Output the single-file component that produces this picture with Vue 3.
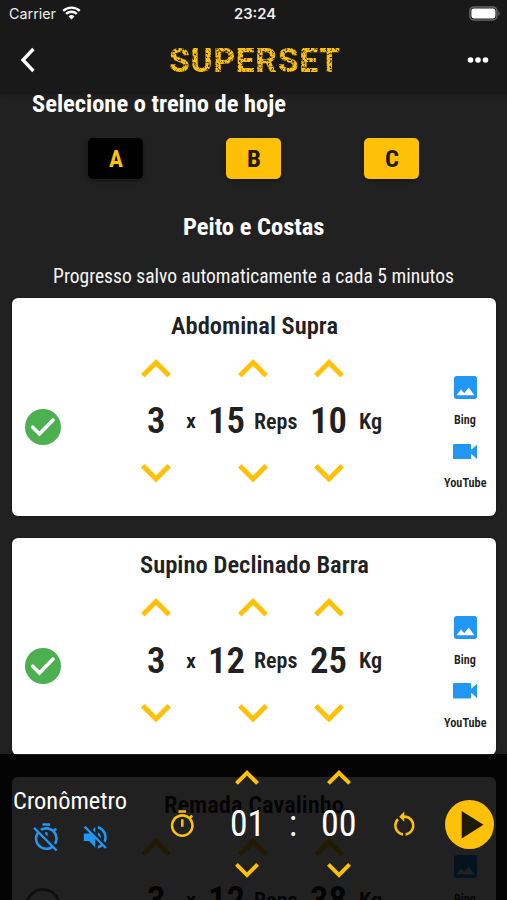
<template>
  <div class="screen">
    <header class="top">
      <div class="status-bar">
        <div class="carrier">
          <FitText text="Carrier" :size="14.6" :width="47" :weight="400" family="Inter" />
          <svg class="wifi" width="19" height="14" viewBox="0 0 19 14">
            <path d="M1.2 4.9a12 12 0 0 1 16.6 0" />
            <path d="M4.1 7.9a7.8 7.8 0 0 1 10.8 0" />
            <path class="wifi-dot" d="M9.5 13.4 6.5 10.4a4.4 4.4 0 0 1 6 0z" />
          </svg>
        </div>
        <FitText text="23:24" :size="14.6" :width="42" :weight="600" family="Inter" />
        <svg class="battery" width="32" height="15" viewBox="0 0 32 15">
          <rect x="0.9" y="0.9" width="27" height="13" rx="4" fill="none" stroke="#666" stroke-width="1.5" />
          <rect x="2.4" y="2.4" width="24" height="10" rx="2.4" fill="#fff" />
          <path d="M29.3 5v4.8c1.8-.6 1.8-4.2 0-4.8z" fill="#666" />
        </svg>
      </div>
      <nav class="nav-bar">
        <svg class="back" width="16" height="26" viewBox="0 0 16 26">
          <path d="M13.4 2 3 13l10.4 11" />
        </svg>
        <svg class="logo" width="174" height="36" viewBox="0 0 174 36">
          <defs>
            <filter id="worn" x="0" y="0" width="100%" height="100%">
              <feTurbulence type="fractalNoise" baseFrequency="0.45" numOctaves="2" seed="4" result="noise" />
              <feColorMatrix in="noise" type="matrix" values="0 0 0 0 0  0 0 0 0 0  0 0 0 0 0  -4 0 0 0 3" result="holes" />
              <feComposite in="SourceGraphic" in2="holes" operator="in" />
            </filter>
          </defs>
          <text x="1" y="30" textLength="171" lengthAdjust="spacing" filter="url(#worn)">SUPERSET</text>
        </svg>
        <svg class="more" width="22" height="6" viewBox="0 0 22 6">
          <circle v-for="n in 3" :key="n" :cx="n * 7.5 - 4" cy="3" r="2.8" />
        </svg>
      </nav>
    </header>

    <main class="content">
      <h2 class="choose">
        <FitText text="Selecione o treino de hoje" :size="24" :width="254" />
      </h2>

      <div class="tabs">
        <button
          v-for="tab in tabs"
          :key="tab"
          :class="['tab', { active: tab === activeTab }]"
          @click="activeTab = tab"
        >
          <FitText :text="tab" :size="24.5" :width="14" />
        </button>
      </div>

      <h2 class="group">
        <FitText text="Peito e Costas" :size="24.5" :width="141.5" />
      </h2>
      <p class="hint">
        <FitText text="Progresso salvo automaticamente a cada 5 minutos" :size="19.6" :width="401" :weight="400" />
      </p>

      <section v-for="item in exercises" :key="item.name" class="card">
        <h3><FitText :text="item.name" :size="24.5" :width="item.width" :weight="600" /></h3>
        <div class="card-body">
          <button class="check" @click="item.done = !item.done">
            <svg v-if="item.done" width="36" height="36" viewBox="0 0 36 36">
              <circle cx="18" cy="18" r="18" fill="#4caf50" />
              <path d="M7.7 18.2 14.5 25 28 11" fill="none" stroke="#fff" stroke-width="3.6" stroke-linecap="round" />
            </svg>
            <svg v-else width="36" height="36" viewBox="0 0 36 36">
              <circle cx="18" cy="18" r="16.5" fill="none" stroke="#757575" stroke-width="3" />
            </svg>
          </button>

          <div class="steppers">
            <Chevron class="c1" up @click="item.sets++" />
            <Chevron class="c3" up @click="item.reps++" />
            <Chevron class="c4" up @click="item.kg++" />
            <FitText class="c1 value" :text="item.sets" :size="36.7" :width="18.5" :weight="600" />
            <FitText class="c2 value" text="x" :size="21" :width="10" :weight="600" />
            <div class="c3 value reps">
              <FitText :text="item.reps" :size="36.7" :width="37" :weight="600" />
              <FitText text="Reps" :size="22" :width="43.5" :weight="600" />
            </div>
            <FitText class="c4 value" :text="item.kg" :size="36.7" :width="37" :weight="600" />
            <FitText class="c5 value" text="Kg" :size="22" :width="23" :weight="600" />
            <Chevron class="c1 down" @click="item.sets--" />
            <Chevron class="c3 down" @click="item.reps--" />
            <Chevron class="c4 down" @click="item.kg--" />
          </div>

          <div class="links">
            <svg width="23" height="23" viewBox="3 3 18 18">
              <path d="M21 19V5c0-1.100-.9-2-2-2H5c-1.100 0-2 .9-2 2v14c0 1.100.9 2 2 2h14c1.100 0 2-.9 2-2zM8.500 13.500l2.500 3.010L14.500 12l4.500 6H5l3.500-4.500z" />
            </svg>
            <FitText class="bing" text="Bing" :size="12.2" :width="22" :weight="600" />
            <svg class="video" width="24" height="15.6" viewBox="3 6 18.5 12">
              <path d="M17 10.500V7c0-.55-.45-1-1-1H4c-.55 0-1 .45-1 1v10c0 .55.45 1 1 1h12c.55 0 1-.45 1-1v-3.500l4.500 4v-11l-4.500 4z" />
            </svg>
            <FitText class="youtube" text="YouTube" :size="12.2" :width="42.5" :weight="600" />
          </div>
        </div>
      </section>
    </main>

    <footer class="timer">
      <div class="timer-left">
        <FitText text="Cronômetro" :size="24.2" :width="114" :weight="400" />
        <div class="toggles">
          <svg class="icon" viewBox="0 0 24 24">
            <path d="M19.040 4.550l-1.420 1.420C16.070 4.740 14.120 4 12 4c-1.830 0-3.530.55-4.950 1.480l1.460 1.460C9.530 6.350 10.730 6 12 6c3.870 0 7 3.130 7 7 0 1.270-.35 2.470-.94 3.490l1.450 1.450C20.450 16.530 21 14.830 21 13c0-2.120-.74-4.070-1.970-5.610l1.420-1.420-1.410-1.420zM15 1H9v2h6V1zm-4 8.440l2 2V8h-2v1.440zM3.020 4L1.750 5.270 4.500 8.030C3.550 9.450 3 11.160 3 13c0 4.970 4.020 9 9 9 1.840 0 3.550-.55 4.980-1.500l2.500 2.500 1.270-1.270-7.710-7.710L3.020 4zM12 20c-3.870 0-7-3.130-7-7 0-1.280.35-2.480.95-3.520l9.560 9.560c-1.030.61-2.230.96-3.510.96z" />
          </svg>
          <svg class="icon" viewBox="0 0 24 24">
            <path d="M16.500 12c0-1.770-1.020-3.290-2.500-4.030v2.210l2.450 2.450c.03-.2.05-.41.05-.63zm2.500 0c0 .94-.2 1.820-.54 2.640l1.510 1.510C20.630 14.910 21 13.500 21 12c0-4.280-2.990-7.860-7-8.770v2.060c2.890.86 5 3.540 5 6.710zM4.270 3L3 4.270 7.730 9H3v6h4l5 5v-6.730l4.250 4.250c-.67.52-1.420.93-2.250 1.180v2.060c1.380-.31 2.630-.95 3.690-1.810L19.730 21 21 19.730l-9-9L4.270 3zM12 4L9.910 6.090 12 8.180V4z" />
          </svg>
        </div>
      </div>
      <svg class="icon amber stopwatch" viewBox="0 0 24 24">
        <path d="M15 1H9v2h6V1zm-4 13h2V8h-2v6zm8.030-6.610l1.420-1.420c-.43-.51-.9-.99-1.410-1.410l-1.420 1.420C16.070 4.740 14.120 4 12 4c-4.970 0-9 4.030-9 9s4.020 9 9 9 9-4.030 9-9c0-2.120-.74-4.070-1.970-5.610zM12 20c-3.870 0-7-3.130-7-7s3.130-7 7-7 7 3.130 7 7-3.130 7-7 7z" />
      </svg>
      <div class="clock">
        <div class="digits">
          <Chevron small up @click="minutes++" />
          <FitText :text="pad(minutes)" :size="37" :width="35" :weight="400" />
          <Chevron small @click="minutes--" />
        </div>
        <FitText class="colon" text=":" :size="36.7" :width="8" :weight="400" />
        <div class="digits">
          <Chevron small up @click="seconds++" />
          <FitText :text="pad(seconds)" :size="37" :width="35.5" :weight="400" />
          <Chevron small @click="seconds--" />
        </div>
      </div>
      <svg class="icon amber restart" viewBox="0 0 24 24">
        <path d="M12 5V2L8 6l4 4V7c3.310 0 6 2.690 6 6 0 2.970-2.170 5.430-5 5.910v2.020c3.950-.49 7-3.850 7-7.930 0-4.420-3.580-8-8-8zm-6 8c0-1.650.67-3.150 1.760-4.240L6.340 7.340C4.900 8.790 4 10.790 4 13c0 4.080 3.050 7.440 7 7.930v-2.020c-2.830-.48-5-2.940-5-5.910z" />
      </svg>
      <button class="play">
        <svg width="49" height="49" viewBox="0 0 49 49">
          <circle cx="24.5" cy="24.5" r="24.5" fill="#ffc107" />
          <path d="M16.7 11v27.5l21.8-13.75z" fill="#211a03" />
        </svg>
      </button>
    </footer>
  </div>
</template>

<script setup>
import { h, ref } from 'vue'

// One line of text squeezed to a given width, for the condensed look
const FitText = ({ text, size, width, weight = 700, family }) =>
  h('svg', { width, height: size, class: 'fit-text', viewBox: `0 0 ${width} ${size}` }, [
    h('text', {
      x: 0,
      y: size * 0.85,
      textLength: width,
      lengthAdjust: 'spacingAndGlyphs',
      'font-size': size,
      'font-weight': weight,
      'font-family': family ? `${family}, sans-serif` : undefined
    }, String(text))
  ])
FitText.props = ['text', 'size', 'width', 'weight', 'family']

const Chevron = ({ up, small }) =>
  h('svg', {
    class: 'chevron',
    width: small ? 24 : 30,
    height: small ? 14.8 : 18.5,
    viewBox: '0 0 12 7.41'
  }, [
    h('path', {
      d: up
        ? 'M6 0 0 6l1.410 1.410L6 2.830l4.590 4.580L12 6z'
        : 'M10.590 0 6 4.580 1.410 0 0 1.410l6 6 6-6z'
    })
  ])
Chevron.props = { up: Boolean, small: Boolean }

const tabs = ['A', 'B', 'C']
const activeTab = ref('A')

const exercises = ref([
  { name: 'Abdominal Supra', width: 167, sets: 3, reps: 15, kg: 10, done: true },
  { name: 'Supino Declinado Barra', width: 229, sets: 3, reps: 12, kg: 25, done: true },
  { name: 'Remada Cavalinho', width: 180, sets: 3, reps: 12, kg: 38, done: false }
])

const minutes = ref(1)
const seconds = ref(0)
const pad = (n) => String(n).padStart(2, '0')
</script>

<style>
body {
  background: #212121;
}

.fit-text {
  display: block;
  flex-shrink: 0;
  overflow: visible;
  fill: currentColor;
  font-family: "Roboto Condensed", Roboto, sans-serif;
}

.chevron {
  display: block;
  flex-shrink: 0;
  fill: #ffc107;
  cursor: pointer;
}
</style>

<style scoped>
.screen {
  position: relative;
  height: 900px;
  overflow: hidden;
  background: #212121;
  color: #fff;
  font-family: Roboto, sans-serif;
}

.screen svg {
  display: block;
  flex-shrink: 0;
}

h2,
h3,
p {
  margin: 0;
}

button {
  padding: 0;
  border: none;
  background: none;
  cursor: pointer;
}

/* Header */
.top {
  position: relative;
  height: 94px;
  background: #191919;
  box-shadow: 0 1px 4px rgba(0, 0, 0, 0.3);
}

.status-bar {
  display: grid;
  grid-template-columns: 1fr auto 1fr;
  align-items: center;
  height: 28px;
  padding: 0 6px 0 9px;
  color: #eee;
}

.carrier {
  display: flex;
  align-items: center;
  gap: 6px;
}

.wifi {
  fill: none;
  stroke: #fff;
  stroke-width: 2.3;
  margin-top: -2px;
}

.wifi .wifi-dot {
  fill: #fff;
  stroke: none;
}

.battery {
  justify-self: end;
  margin-top: -2px;
}

.nav-bar {
  display: grid;
  grid-template-columns: 1fr auto 1fr;
  align-items: center;
  height: 64px;
  padding: 0 18px 0 20px;
}

.back {
  fill: none;
  stroke: #fff;
  stroke-width: 3.3;
}

.logo {
  fill: #ffc107;
  font: 800 33.5px Roboto, sans-serif;
}

.more {
  justify-self: end;
  fill: #fff;
}

/* Workout selection */
.choose {
  padding: 0 31.5px;
  margin-top: -2.5px;
  position: relative;
}

.tabs {
  display: grid;
  grid-template-columns: repeat(3, 138px);
  justify-items: center;
  margin: 22px 0 0 46.5px;
}

.tab {
  display: flex;
  align-items: center;
  justify-content: center;
  width: 55px;
  height: 41px;
  border-radius: 5px;
  background: #ffc107;
  color: #211a03;
  box-shadow: 0 2px 4px rgba(0, 0, 0, 0.3);
}

.tab.active {
  background: #000;
  color: #ffc107;
}

.group,
.hint {
  display: flex;
  justify-content: center;
}

.group {
  margin-top: 35.5px;
}

.hint {
  margin-top: 27.5px;
  color: #f5f5f5;
}

/* Exercise cards */
.card {
  height: 217.5px;
  margin: 0 11px 22px 12px;
  border-radius: 6px;
  background: #fff;
  color: #212121;
  box-shadow: 0 1px 3px rgba(0, 0, 0, 0.4);
}

.hint + .card {
  margin-top: 12.5px;
}

.card h3 {
  display: flex;
  justify-content: center;
  padding-top: 14.5px;
}

.card-body {
  display: grid;
  grid-template-columns: 124px 1fr 48px;
  padding: 21.8px 7px 0 0;
}

.check {
  justify-self: start;
  align-self: start;
  margin: 50px 0 0 12.5px;
}

.steppers {
  display: grid;
  grid-template-columns: 40px 30px 93px 59px 25px;
  grid-template-rows: 18.5px 86.7px 18.5px;
  align-items: center;
  justify-items: center;
  align-self: start;
}

.c1 { grid-column: 1; }
.c2 { grid-column: 2; }
.c3 { grid-column: 3; }
.c4 { grid-column: 4; }
.c5 { grid-column: 5; }

.value {
  grid-row: 2;
}

.down {
  grid-row: 3;
}

.reps {
  display: flex;
  align-items: center;
  gap: 9px;
}

.links {
  display: flex;
  flex-direction: column;
  align-items: center;
  padding-top: 17.5px;
  fill: #2196f3;
}

.bing {
  margin-top: 14.8px;
}

.video {
  margin-top: 17.2px;
}

.youtube {
  margin-top: 18px;
}

/* Timer panel floating over the list */
.timer {
  position: absolute;
  left: 0;
  right: 0;
  bottom: 0;
  display: flex;
  align-items: flex-start;
  height: 146.5px;
  background: rgba(0, 0, 0, 0.87);
}

.timer-left {
  width: 166.5px;
  padding: 34px 0 0 13px;
  box-sizing: border-box;
}

.toggles {
  display: flex;
  gap: 18.5px;
  margin: 10.5px 0 0 17.5px;
  fill: #2196f3;
}

.icon {
  width: 30.6px;
  height: 30.6px;
}

.amber {
  fill: #ffc107;
}

.stopwatch {
  margin-top: 55px;
}

.clock {
  display: flex;
  align-items: center;
  padding-top: 16.5px;
  margin-left: 32px;
}

.digits {
  display: flex;
  flex-direction: column;
  align-items: center;
  justify-content: space-between;
  width: 36px;
  height: 107.5px;
}

.colon {
  margin: 0 24px 0 23.5px;
}

.restart {
  margin: 55.5px 0 0 32px;
}

.play {
  margin: 46px 0 0 26px;
}
</style>
